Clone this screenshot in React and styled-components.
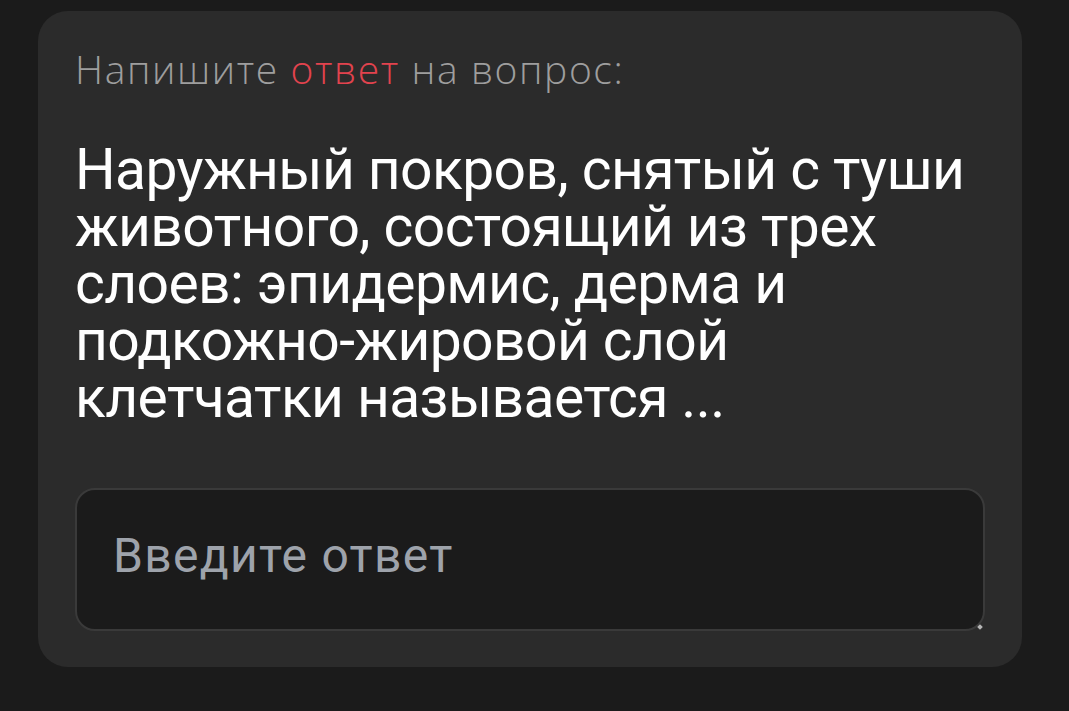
import React from "react";
import styled, { createGlobalStyle } from "styled-components";

const Global = createGlobalStyle`
  html, body { margin: 0; padding: 0; background: #1b1b1b; }
  body { font-family: "Roboto", "Open Sans", sans-serif; }
  * { box-sizing: border-box; }
`;

const Page = styled.div`
  min-height: 711px;
  padding: 11px 47px 0 38px;
  background: #1b1b1b;
`;

const Card = styled.section`
  background: #2b2b2b;
  border-radius: 30px;
  padding: 34px 37px 36px 37px;
  display: flex;
  flex-direction: column;
  height: 656px;
`;

const Label = styled.div`
  font-family: "Open Sans", sans-serif;
  font-weight: 300;
  font-size: 39px;
  line-height: 48px;
  color: #9e9e9e;
  letter-spacing: 1.6px;
  white-space: nowrap;
`;

const Accent = styled.span`
  color: #e2434e;
`;

const Question = styled.h2`
  margin: 48px 0 0 0;
  font-family: "Roboto", sans-serif;
  font-weight: 400;
  font-size: 57px;
  line-height: 57px;
  color: #ffffff;
  letter-spacing: -0.6px;
`;

const Field = styled.div`
  position: relative;
  margin-top: 62px;
  &::after {
    content: "";
    position: absolute;
    right: 3px;
    bottom: 2px;
    width: 4px;
    height: 4px;
    background: #b5b5b5;
    transform: rotate(45deg);
  }
`;

const Answer = styled.textarea`
  display: block;
  width: 100%;
  height: 143px;
  background: #1b1b1b;
  border: 2px solid #3a3a3a;
  border-radius: 20px;
  padding: 38px 36px;
  font-family: "Roboto", sans-serif;
  font-size: 48px;
  line-height: 56px;
  letter-spacing: 1.3px;
  color: #e0e0e0;
  outline: none;
  resize: none;
  &::placeholder { color: #9ea3ab; }
`;

export default function App() {
  return (
    <>
      <Global />
      <Page>
        <Card>
          <Label>
            Напишите <Accent>ответ</Accent> на вопрос:
          </Label>
          <Question>
            Наружный покров, снятый с туши животного, состоящий из трех слоев: эпидермис, дерма и подкожно-жировой слой клетчатки называется ...
          </Question>
          <Field>
            <Answer placeholder="Введите ответ" />
          </Field>
        </Card>
      </Page>
    </>
  );
}
